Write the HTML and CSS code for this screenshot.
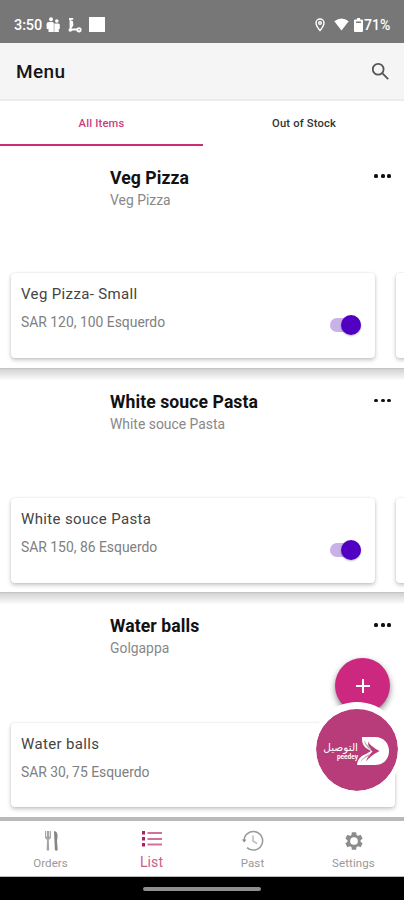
FILE: index.html
```html
<!DOCTYPE html>
<html lang="en">
<head>
<meta charset="utf-8">
<title>Menu</title>
<link rel="stylesheet" href="styles.css">
</head>
<body>
<div class="app">
  <div class="status">
    <span class="time">3:50</span>
    <svg class="s-people" width="14" height="16" viewBox="0 0 14 16" fill="#fff"><circle cx="5" cy="2.200" r="2"/><circle cx="10.800" cy="4" r="1.800"/><path d="M.500 7.200Q.500 5 3 5h3.500q1.300 0 1.300 1.500V15H2.500V12H.700zM8.300 6.500h4q1.500 0 1.500 1.600V12h-1v3H8.300z"/></svg>
    <svg class="s-scoot" width="14" height="16" viewBox="0 0 14 16" fill="none" stroke="#fff" stroke-width="1.800"><path d="M1 1.800h4.200M2.500 2v10.500h7.500M4 4l.5 4L2.500 11"/><circle cx="2.300" cy="13" r=".900"/><circle cx="11" cy="12.800" r="1.700"/></svg>
    <span class="s-square"></span>
    <span class="grow"></span>
    <svg class="s-pin" width="10" height="14" viewBox="0 0 10 14" fill="none" stroke="#fff" stroke-width="1.400"><path d="M5 12.500C2.400 9.400 1 7.200 1 5a4 4 0 0 1 8 0c0 2.200-1.400 4.400-4 7.500z"/><circle cx="5" cy="5" r="1.300"/></svg>
    <svg class="s-wifi" width="15" height="13" viewBox="0 0 15 13" fill="#fff"><path d="M.3 3.300Q7.500-2.500 14.700 3.300L7.500 12.500z"/></svg>
    <svg class="s-batt" width="9" height="14" viewBox="0 0 9 14"><path fill="#fff" d="M3 0h3v1.500h2q1 0 1 1V13q0 1-1 1H1q-1 0-1-1V2.500q0-1 1-1h2z"/><path d="M2 3.500h5v1.500H2z" fill="#777"/></svg>
    <span class="pct">71%</span>
  </div>
  <header class="header">
    <h1>Menu</h1>
    <svg width="19" height="19" viewBox="0 0 19 19" fill="none" stroke="#555" stroke-width="1.800"><circle cx="7.200" cy="7.200" r="5.400"/><path d="M11.200 11.200l6 6"/></svg>
  </header>
  <nav class="tabs">
    <div class="tab active">All Items</div>
    <div class="tab">Out of Stock</div>
  </nav>
  <main class="list">
    <section class="item first">
      <div class="info"><div><h2>Veg Pizza</h2><p>Veg Pizza</p></div><div class="dots"><i></i><i></i><i></i></div></div>
      <div class="cards">
        <div class="card"><div><h3>Veg Pizza- Small</h3><p>SAR 120, 100 Esquerdo</p></div><span class="toggle"></span></div>
        <div class="card next"></div>
      </div>
    </section>
    <section class="item">
      <div class="info"><div><h2>White souce Pasta</h2><p>White souce Pasta</p></div><div class="dots"><i></i><i></i><i></i></div></div>
      <div class="cards">
        <div class="card"><div><h3>White souce Pasta</h3><p>SAR 150, 86 Esquerdo</p></div><span class="toggle"></span></div>
        <div class="card next"></div>
      </div>
    </section>
    <section class="item">
      <div class="info"><div><h2>Water balls</h2><p>Golgappa</p></div><div class="dots"><i></i><i></i><i></i></div></div>
      <div class="cards">
        <div class="card wide"><div><h3>Water balls</h3><p>SAR 30, 75 Esquerdo</p></div></div>
      </div>
    </section>
    <div class="fab"><svg width="14" height="14" viewBox="0 0 14 14" stroke="#fff" stroke-width="2"><path d="M7 0v14M0 7h14"/></svg></div>
    <div class="brand">
      <div class="brand-text"><span lang="ar" dir="rtl">التوصيل</span><b>peedey</b></div>
      <svg width="32" height="28" viewBox="0 0 32 28"><path fill="#fff" d="M5 0h13c9 0 14 6.500 14 14s-5 14-14 14H0c.500-6 4-9 9-11l5-3-5-3C6 8.500 4.500 5 5 0z"/><path fill="#b83c79" d="M11 4.500Q13 9 22.500 14 13 19 9 24.500 10 20 15.500 14.500 11 11 11 4.500z"/><path fill="#b9b0b5" d="M7 3q2 4.500 7 8.500l-1 1Q7.500 9 7 3zM3 25q3-5 9-8l1 1.200Q7 20.500 3 25z"/></svg>
    </div>
  </main>
  <footer class="bottom">
    <div class="nav"><svg class="cutlery" width="14" height="22" viewBox="0 0 14 22"><path fill="#a5a5a5" d="M0 1v6q0 2 2 2.800L1.600 20q1.300 1.600 2.600 0L3.800 9.800Q6 9 6 7V1H5v5.500h-.700V1H1.800v5.500H1V1z"/><path fill="#858585" d="M9 1.200Q13 1 12.500 7l-.5 4 .7 9q-1.400 1.600-2.800 0z"/></svg><span>Orders</span></div>
    <div class="nav n-list"><svg width="22" height="18" viewBox="0 0 22 18"><g fill="#b0205f"><rect x="1" y="1" width="3" height="3.500"/><rect x="1" y="7" width="3" height="3.500"/><rect x="1" y="13" width="3" height="3.500"/></g><path d="M6.500 3H21M6.500 9H21M6.500 14.500H21" stroke="#d4709c" stroke-width="1.800"/></svg><span>List</span></div>
    <div class="nav"><svg width="22" height="22" viewBox="0 0 22 22" fill="none" stroke="#999" stroke-width="1.500"><path d="M2 11A9.300 9.300 0 1 1 5 17.600"/><path d="M0 9.500h4.400L2.200 12.500z" fill="#888" stroke="none"/><path d="M11 5.500V11l4 2.500" stroke="#bbb"/></svg><span>Past</span></div>
    <div class="nav"><svg width="22" height="22" viewBox="0 0 24 24" fill="#8c8c8c"><path d="M19.140 12.940c.040-.300.060-.610.060-.940s-.020-.640-.070-.940l2.030-1.580a.490.490 0 0 0 .120-.610l-1.920-3.320a.488.488 0 0 0-.590-.220l-2.390.960c-.500-.380-1.030-.700-1.620-.940l-.360-2.540A.484.484 0 0 0 13.920 2.400h-3.840c-.240 0-.430.170-.470.410l-.360 2.540c-.590.240-1.130.570-1.620.940l-2.390-.960a.488.488 0 0 0-.590.220L2.740 8.870a.49.490 0 0 0 .120.610l2.030 1.580c-.050.300-.090.630-.090.940s.020.640.070.940l-2.030 1.580a.49.490 0 0 0-.12.610l1.920 3.320c.12.220.37.290.59.220l2.390-.96c.5.380 1.030.7 1.620.940l.36 2.540c.05.240.24.410.48.410h3.840c.24 0 .44-.17.47-.41l.36-2.540c.59-.24 1.130-.56 1.620-.94l2.390.96c.22.080.47 0 .59-.22l1.920-3.320a.49.490 0 0 0-.12-.61z"/><circle cx="12" cy="12" r="4.200" fill="#fff"/></svg><span>Settings</span></div>
  </footer>
  <div class="system"><span></span></div>
</div>
</body>
</html>
```
FILE: styles.css
```css
* { box-sizing: border-box; }
body { margin: 0; font-family: Roboto, "Liberation Sans", sans-serif; background: #fff; }
h1, h2, h3, p { margin: 0; font-weight: 400; }
svg { display: block; flex: none; }
.app { width: 404px; height: 900px; display: flex; flex-direction: column; overflow: hidden; }
.status { height: 43px; flex: none; background: #777; display: flex; align-items: center; padding: 6px 13px 0 14px; color: #fff; }
.time { font-size: 14.500px; font-weight: 500; width: 32px; letter-spacing: -.1px; padding-top: 1px; }
.s-scoot { margin-left: 8px; }
.s-square { width: 16px; height: 15px; background: #fff; margin-left: 7px; }
.grow { flex: 1; }
.s-wifi { margin-left: 9px; }
.s-batt { margin-left: 5px; }
.pct { font-size: 14px; font-weight: 500; width: 27px; margin-left: 1px; }
.header { height: 58px; flex: none; background: #f5f5f5; border-bottom: 2px solid #ececec; display: flex; align-items: center; justify-content: space-between; padding: 1px 14px 0 16px; }
h1 { font-size: 19px; font-weight: 500; color: #161616; letter-spacing: .4px; }
.tabs { height: 46px; flex: none; display: grid; grid-template-columns: 203px 1fr; }
.tab { text-align: center; font-size: 11.200px; font-weight: 500; line-height: 45px; color: #333; letter-spacing: .17px; padding-left: 1px; }
.active { color: #cd3c80; border-bottom: 2px solid #cc2b78; height: 45px; padding-left: 0; }
.list { height: 674px; flex: none; position: relative; overflow: hidden; border-bottom: 4px solid #b9b9b9; }
.item { height: 224.500px; border-top: 1px solid #c4c4c4; padding-top: 23px; background: linear-gradient(#d2d2d2, #f4f4f4 9px, #fff 11px); }
.first { height: 220.500px; padding-top: 20px; border: 0; background: #fff; }
.info { height: 81.500px; display: flex; justify-content: space-between; padding: 0 13px 0 110px; }
h2 { font-size: 17.600px; line-height: 21px; font-weight: 700; color: #111; white-space: nowrap; letter-spacing: .08px; }
.info p { font-size: 13.900px; line-height: 22px; color: #888; }
.dots { display: flex; gap: 2.500px; padding-top: 7px; }
.dots i { width: 4px; height: 3.500px; border-radius: 1.500px; background: #111; }
.cards { display: flex; gap: 21px; padding: 25px 0 0 11px; overflow: hidden; height: 119px; }
.card { width: 364px; height: 84.500px; flex: none; border-radius: 4px; background: #fff; box-shadow: 0 2px 4px #0000003b, 0 0 2px #00000018; padding: 10px 14px 0 10px; display: flex; justify-content: space-between; }
.wide { width: 384px; }
h3 { font-size: 15px; line-height: 22px; color: #444; letter-spacing: .36px; }
.card p { font-size: 13.900px; line-height: 22px; padding-top: 6px; color: #808080; }
.toggle { width: 31px; height: 14px; border-radius: 7px; background: #c9b1e9; margin-top: 35px; display: flex; justify-content: flex-end; align-items: center; }
.toggle::after { content: ""; width: 20px; height: 20px; border-radius: 50%; background: #5100c3; flex: none; box-shadow: 0 1px 2px #0004; }
.first .info { height: 81px; padding-top: .5px; }
.first .dots { padding-top: 6.500px; }
.fab { position: absolute; left: 335px; top: 511px; width: 55px; height: 55px; border-radius: 50%; background: #cc2880; display: flex; align-items: center; justify-content: center; box-shadow: 0 3px 6px #0007; }
.brand { position: absolute; left: 311px; top: 555px; width: 92px; height: 94px; border: 6px solid #fff; border-left-width: 5px; border-right-width: 5px; border-top-width: 7px; border-bottom-width: 5px; border-radius: 50%; background: #b83c79; background-clip: padding-box; display: flex; align-items: center; padding-left: 9px; }
.brand-text { width: 33px; color: #fff; text-align: right; display: flex; flex-direction: column; white-space: nowrap; padding-top: 2px; }
.brand-text span { font: 10.500px/12px "DejaVu Sans", sans-serif; height: 12px; }
.brand-text b { font-size: 6.500px; line-height: 7px; margin-top: 1px; }
.brand svg { margin-left: -1px; margin-top: 2px; }
.bottom { height: 56px; flex: none; display: grid; grid-template-columns: repeat(4, 1fr); background: #fff; border-bottom: 1px solid #bbb; }
.nav { display: flex; flex-direction: column; align-items: center; color: #999; font-size: 11.500px; line-height: 14px; letter-spacing: .1px; padding-top: 9px; }
.nav span { margin-top: 4px; }
.cutlery { margin-left: 2px; }
.n-list { color: #cb5d8b; font-size: 14px; }
.n-list span { margin-top: 7px; }
.system { height: 23px; flex: none; background: #000; display: flex; justify-content: center; align-items: center; }
.system span { width: 118px; height: 4px; border-radius: 2px; background: #8f8f8f; }
```
